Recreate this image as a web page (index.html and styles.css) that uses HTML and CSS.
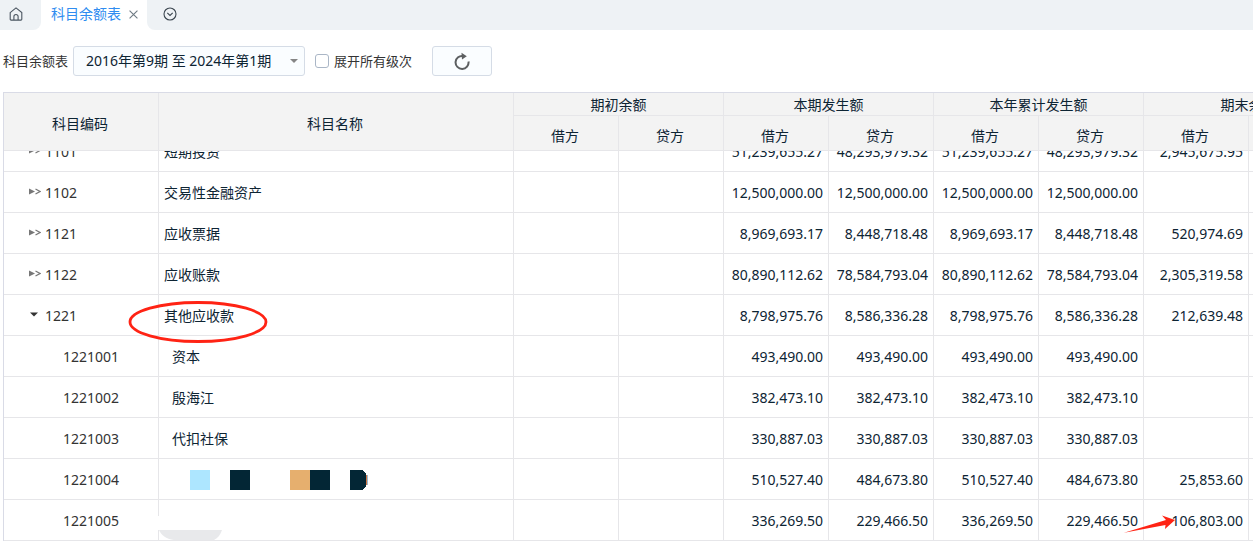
FILE: index.html
```html
<!DOCTYPE html>
<html lang="zh-CN">
<head>
<meta charset="utf-8">
<meta name="viewport" content="width=device-width, initial-scale=1">
<title>科目余额表</title>
<link rel="stylesheet" href="styles.css">
</head>
<body>
<nav class="tabs">
  <a class="tab-home" href="#" aria-label="首页">
    <svg width="14" height="14" viewBox="0 0 14 14" fill="none" stroke="#4a5560" stroke-width="1.1"><path d="M1.2 5.6 7 .9l5.8 4.7v6.6a.9.9 0 0 1-.9.9H2.1a.9.9 0 0 1-.9-.9z"/><path d="M4.9 13V9.6a2.1 2.1 0 0 1 4.2 0V13"/></svg>
  </a>
  <div class="tab-active">
    <a href="#">科目余额表</a>
    <button type="button" class="icon-button" aria-label="关闭">
      <svg width="9" height="9" viewBox="0 0 8 8" stroke="#6f7b84" stroke-width="1"><path d="M.5.5l7 7M7.5.5l-7 7"/></svg>
    </button>
  </div>
  <div class="tab-rest">
    <button type="button" class="icon-button" aria-label="更多">
      <svg width="14" height="14" viewBox="0 0 14 14" fill="none" stroke="#3b464f" stroke-width="1.1"><circle cx="7" cy="7" r="6"/><path d="M4.3 5.9 7 8.5l2.7-2.6"/></svg>
    </button>
  </div>
</nav>

<form class="toolbar">
  <label for="period">科目余额表</label>
  <div class="period">
    <select id="period"><option>2016年第9期 至 2024年第1期</option></select>
    <svg class="caret" width="8" height="4" viewBox="0 0 8 4"><path d="M0 0h8L4 4z" fill="#858585"/></svg>
  </div>
  <input type="checkbox" id="expand">
  <label for="expand">展开所有级次</label>
  <button type="button" class="refresh" aria-label="刷新">
    <svg width="18" height="18" viewBox="0 0 18 18"><path d="M10.200 4A6.500 6.500 0 1 0 15.500 9.500" fill="none" stroke="#5c5f61" stroke-width="2"/><path d="M8.500 .8l5.300 3.400-4.800 3.300z" fill="#5c5f61"/></svg>
  </button>
</form>

<main class="sheet">
<table>
  <colgroup><col class="c-code"><col class="c-name"><col span="8" class="c-sum"></colgroup>
  <thead>
    <tr class="head-top"><th rowspan="2" class="tall">科目编码</th><th rowspan="2" class="tall">科目名称</th><th colspan="2">期初余额</th><th colspan="2">本期发生额</th><th colspan="2">本年累计发生额</th><th colspan="2">期末余额</th></tr>
    <tr class="head-sub"><th>借方</th><th>贷方</th><th>借方</th><th>贷方</th><th>借方</th><th>贷方</th><th>借方</th><th>贷方</th></tr>
  </thead>
  <tbody>
    <tr class="cut"><td class="code"><div><span><svg class="mark" width="12" height="7" viewBox="0 0 12 7"><path d="M0 .5 6 3.5 0 6.5z" fill="#777"/><path d="M6.500 1l4.500 2.500L6.500 6" fill="none" stroke="#777" stroke-width="1.200"/></svg>1101</span></div></td><td class="name"><div><span>短期投资</span></div></td><td></td><td></td><td><div><span>51,239,655.27</span></div></td><td><div><span>48,293,979.32</span></div></td><td><div><span>51,239,655.27</span></div></td><td><div><span>48,293,979.32</span></div></td><td><div><span>2,945,675.95</span></div></td><td></td></tr>
    <tr><td class="code"><svg class="mark" width="12" height="7" viewBox="0 0 12 7"><path d="M0 .5 6 3.5 0 6.5z" fill="#777"/><path d="M6.500 1l4.500 2.500L6.500 6" fill="none" stroke="#777" stroke-width="1.200"/></svg>1102</td><td class="name">交易性金融资产</td><td></td><td></td><td>12,500,000.00</td><td>12,500,000.00</td><td>12,500,000.00</td><td>12,500,000.00</td><td></td><td></td></tr>
    <tr><td class="code"><svg class="mark" width="12" height="7" viewBox="0 0 12 7"><path d="M0 .5 6 3.5 0 6.5z" fill="#777"/><path d="M6.500 1l4.500 2.500L6.500 6" fill="none" stroke="#777" stroke-width="1.200"/></svg>1121</td><td class="name">应收票据</td><td></td><td></td><td>8,969,693.17</td><td>8,448,718.48</td><td>8,969,693.17</td><td>8,448,718.48</td><td>520,974.69</td><td></td></tr>
    <tr><td class="code"><svg class="mark" width="12" height="7" viewBox="0 0 12 7"><path d="M0 .5 6 3.5 0 6.5z" fill="#777"/><path d="M6.500 1l4.500 2.500L6.500 6" fill="none" stroke="#777" stroke-width="1.200"/></svg>1122</td><td class="name">应收账款</td><td></td><td></td><td>80,890,112.62</td><td>78,584,793.04</td><td>80,890,112.62</td><td>78,584,793.04</td><td>2,305,319.58</td><td></td></tr>
    <tr><td class="code"><svg class="mark" width="12" height="7" viewBox="0 0 12 7"><path d="M1 1.500h8L5 5.500z" fill="#333"/></svg>1221</td><td class="name">其他应收款</td><td></td><td></td><td>8,798,975.76</td><td>8,586,336.28</td><td>8,798,975.76</td><td>8,586,336.28</td><td>212,639.48</td><td></td></tr>
    <tr class="child"><td class="code">1221001</td><td class="name">资本</td><td></td><td></td><td>493,490.00</td><td>493,490.00</td><td>493,490.00</td><td>493,490.00</td><td></td><td></td></tr>
    <tr class="child"><td class="code">1221002</td><td class="name">殷海江</td><td></td><td></td><td>382,473.10</td><td>382,473.10</td><td>382,473.10</td><td>382,473.10</td><td></td><td></td></tr>
    <tr class="child"><td class="code">1221003</td><td class="name">代扣社保</td><td></td><td></td><td>330,887.03</td><td>330,887.03</td><td>330,887.03</td><td>330,887.03</td><td></td><td></td></tr>
    <tr class="child"><td class="code">1221004</td><td class="name masked"><svg width="178" height="20" viewBox="0 0 178 20" shape-rendering="crispEdges"><path d="M0 0h20v20H0z" fill="#ade6ff"/><path d="M40 0h20v20H40zM120 0h20v20h-20zM160 0h12l4 4 1 6-1 6-4 4h-12z" fill="#032635"/><path d="M100 0h20v20h-20z" fill="#e6af6e"/><path d="M176 5h1v10h-1z" fill="#cf7442"/><path d="M177 5h1v10h-1z" fill="#9bb9cf"/></svg></td><td></td><td></td><td>510,527.40</td><td>484,673.80</td><td>510,527.40</td><td>484,673.80</td><td>25,853.60</td><td></td></tr>
    <tr class="child"><td class="code">1221005</td><td class="name"></td><td></td><td></td><td>336,269.50</td><td>229,466.50</td><td>336,269.50</td><td>229,466.50</td><td>106,803.00</td><td></td></tr>
  </tbody>
</table>
<svg class="notes" width="1250" height="449" viewBox="3 92 1250 449" aria-hidden="true">
  <path d="M157 516h4v14h-4z" fill="#fff"/>
  <path d="M159 530h63c-2 5-4 8-8 10h-40c-8-1-13-5-15-10z" fill="#e8e9eb"/>
  <ellipse cx="198" cy="322" rx="68" ry="19.500" fill="none" stroke="#ff2314" stroke-width="2.800"/>
  <path d="M1124 532.700 1166 520l-4-4.500 13 4.500-10 9 .5-4z" fill="#ff2314"/>
</svg>
</main>
</body>
</html>
```
FILE: styles.css
```css
* { box-sizing: border-box; }
body {
  margin: 0;
  overflow: hidden;
  background: #fff;
  color: #0d2433;
  font: 14px/20px "Noto Sans", "Noto Sans CJK SC", sans-serif;
}
a { color: inherit; text-decoration: none; }
button, select, input { font: inherit; color: inherit; margin: 0; }
svg { display: block; }

.tabs { display: flex; height: 30px; }
.tab-home, .tab-rest { display: flex; align-items: center; background: #eef2f5; }
.tab-home { width: 41px; padding: 0 0 2px 9px; border-bottom-right-radius: 8px; }
.tab-active { display: flex; align-items: center; gap: 8px; width: 106px; padding: 0 0 2px 10px; color: #2f8cf0; }
.tab-rest { flex: 1; padding: 0 0 2px 16px; border-bottom-left-radius: 8px; }
.icon-button { padding: 0; border: 0; background: none; }

.toolbar { display: flex; align-items: center; height: 62px; padding-left: 3px; color: #333; font-size: 13px; }
.period { position: relative; width: 232px; margin: 0 10px 0 5px; }
.period select {
  appearance: none;
  width: 100%;
  height: 30px;
  padding: 0 24px 0 12px;
  border: 1px solid #d5dce6;
  border-radius: 3px;
  background: #fafdff;
  color: #0d2433;
  font-size: 14px;
}
.caret { position: absolute; top: 13px; right: 7px; }
.toolbar input {
  appearance: none;
  width: 14px;
  height: 14px;
  margin-right: 5px;
  border: 1px solid #aab6c6;
  border-radius: 3px;
  background: #fff;
}
.refresh {
  display: flex;
  align-items: center;
  justify-content: center;
  width: 60px;
  height: 30px;
  margin-left: 20px;
  padding: 0;
  border: 1px solid #d5dce6;
  border-radius: 3px;
  background: #fafdff;
}

.sheet { position: relative; margin-left: 3px; overflow: hidden; border: solid #d9dbe6; border-width: 1px 0 0 1px; }
table { width: 1350px; table-layout: fixed; border-collapse: separate; border-spacing: 0; }
.c-code { width: 155px; }
.c-name { width: 355px; }
.c-sum { width: 105px; }
th, td { padding: 0 5px; border: solid #e6e6e9; border-width: 0 1px 1px 0; white-space: nowrap; }
th { padding-top: 2px; background: #f3f3f3; font-weight: 400; text-align: center; }
.head-top { height: 23px; }
.head-top th { line-height: 20px; }
.head-top .tall { padding: 4px 6px 0 4px; }
.head-sub { height: 35px; }
.head-sub th { padding: 6px 6px 0 4px; }
td { height: 41px; padding-top: 2px; text-align: right; }
td.code { padding-left: 25px; text-align: left; color: #333; }
td.name { text-align: left; }
.mark { display: inline-block; margin-right: 4px; vertical-align: 3px; }
.child td.code { padding-left: 59px; }
.child td.name { padding-left: 13px; }
.child td.masked { padding-left: 31px; }

.cut td { height: 21px; padding-top: 0; }
.cut div { height: 20px; overflow: hidden; }
.cut span { display: block; margin-top: -20px; line-height: 42px; }

.notes { position: absolute; top: -1px; left: -1px; pointer-events: none; }
```
